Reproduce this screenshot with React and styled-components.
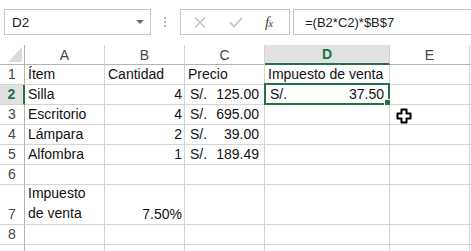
import React from 'react';
import styled, { createGlobalStyle } from 'styled-components';

const GlobalStyle = createGlobalStyle`
  html, body {
    margin: 0;
    padding: 0;
    background: #fff;
    overflow: hidden;
  }
  body {
    font-family: "Liberation Sans", Arial, sans-serif;
    color: #1e1e1e;
  }
`;

const GREEN = '#217346';
const GRID = '#d4d4d4';
const HEAD_LINE = '#b4b4b4';

const Page = styled.div`
  position: relative;
  width: 471px;
  height: 251px;
  overflow: hidden;
`;

const Toolbar = styled.div`
  display: flex;
  align-items: flex-start;
  height: 45px;
  padding: 9px 0 0 4px;
  box-sizing: border-box;
`;

const NameBox = styled.div`
  width: 147px;
  height: 26px;
  box-sizing: border-box;
  border: 1px solid #c6c6c6;
  display: flex;
  align-items: center;
  justify-content: space-between;
  padding: 0 6px 0 7px;
  font-size: 13.5px;
  color: #222;
`;

const Arrow = styled.span`
  width: 0;
  height: 0;
  border-left: 4px solid transparent;
  border-right: 4px solid transparent;
  border-top: 4px solid #6f6f6f;
`;

const Dots = styled.div`
  display: flex;
  flex-direction: column;
  gap: 2px;
  margin: 8px 0 0 13px;
  span {
    width: 2px;
    height: 2px;
    background: #b4b4b4;
  }
`;

const ButtonsBox = styled.div`
  margin-left: 14px;
  width: 110px;
  height: 26px;
  box-sizing: border-box;
  border: 1px solid #c6c6c6;
  display: flex;
  align-items: center;
  padding-left: 13px;
  gap: 23px;
`;

const Fx = styled.span`
  font-family: "Liberation Serif", "Times New Roman", serif;
  font-style: italic;
  font-size: 15px;
  color: #444;
  margin-left: -1px;
  letter-spacing: -1px;
  small {
    font-size: 11px;
  }
`;

const FormulaBox = styled.div`
  flex: 1;
  margin-left: 3px;
  margin-right: -4px;
  height: 26px;
  box-sizing: border-box;
  border: 1px solid #c6c6c6;
  display: flex;
  align-items: center;
  padding-left: 11px;
  font-size: 13px;
  color: #222;
`;

const Sheet = styled.div`
  display: grid;
  grid-template-columns: 25px 80px 80px 80px 125px 80px 1fr;
  grid-template-rows: 20px repeat(6, 20px) 40px 20px 20px;
  font-size: 14px;
`;

const ColHead = styled.div`
  box-sizing: border-box;
  border-right: 1px solid ${GRID};
  border-bottom: ${p => (p.$active ? `2px solid ${GREEN}` : `1px solid ${HEAD_LINE}`)};
  background: ${p => (p.$active ? '#e1e1e1' : '#fff')};
  color: ${p => (p.$active ? GREEN : '#444')};
  font-weight: ${p => (p.$active ? 'bold' : 'normal')};
  display: flex;
  align-items: center;
  justify-content: center;
  line-height: 18px;
`;

const Corner = styled.div`
  box-sizing: border-box;
  border-right: 1px solid ${HEAD_LINE};
  border-bottom: 1px solid ${HEAD_LINE};
  position: relative;
  &::after {
    content: '';
    position: absolute;
    right: 2px;
    bottom: 2px;
    width: 0;
    height: 0;
    border-left: 14px solid transparent;
    border-bottom: 15px solid #dcdcdc;
  }
`;

const RowHead = styled.div`
  box-sizing: border-box;
  border-right: ${p => (p.$active ? `2px solid ${GREEN}` : `1px solid ${HEAD_LINE}`)};
  border-bottom: 1px solid ${GRID};
  background: ${p => (p.$active ? '#e1e1e1' : '#fff')};
  color: ${p => (p.$active ? GREEN : '#444')};
  font-weight: ${p => (p.$active ? 'bold' : 'normal')};
  display: flex;
  align-items: flex-end;
  justify-content: center;
  line-height: 18px;
  padding-bottom: 1px;
`;

const Cell = styled.div`
  position: relative;
  box-sizing: border-box;
  border-right: 1px solid ${GRID};
  border-bottom: 1px solid ${GRID};
  display: flex;
  flex-direction: column;
  justify-content: flex-end;
  align-items: ${p => (p.$right ? 'flex-end' : 'flex-start')};
  padding: 0 2px 1px 3px;
  line-height: ${p => (p.$wrap ? '20px' : '18px')};
  white-space: nowrap;
  color: #111;
`;

const Money = styled.div`
  display: flex;
  justify-content: space-between;
  width: 100%;
  padding: 0 3px 0 2px;
  box-sizing: border-box;
`;

const Selection = styled.div`
  position: absolute;
  left: -1px;
  top: -2px;
  right: -1px;
  bottom: -1px;
  border: 2px solid ${GREEN};
  pointer-events: none;
`;

const Handle = styled.div`
  position: absolute;
  right: -3px;
  bottom: -3px;
  width: 5px;
  height: 5px;
  background: ${GREEN};
  border: 1px solid #fff;
`;

const Cursor = styled.svg`
  position: absolute;
  left: 396px;
  top: 108px;
`;

const columns = ['A', 'B', 'C', 'D', 'E', ''];

const rows = [
  { n: 1, a: 'Ítem', b: 'Cantidad', c: 'Precio', d: 'Impuesto de venta' },
  { n: 2, a: 'Silla', b: '4', price: '125.00', tax: '37.50', active: true },
  { n: 3, a: 'Escritorio', b: '4', price: '695.00' },
  { n: 4, a: 'Lámpara', b: '2', price: '39.00' },
  { n: 5, a: 'Alfombra', b: '1', price: '189.49' },
  { n: 6 },
  { n: 7, lines: ['Impuesto', 'de venta'], b: '7.50%' },
  { n: 8 },
  { n: 9, hidden: true },
];

const App = () => (
  <Page>
    <GlobalStyle />
    <Toolbar>
      <NameBox>
        D2
        <Arrow />
      </NameBox>
      <Dots>
        <span />
        <span />
        <span />
      </Dots>
      <ButtonsBox>
        <svg width="12" height="11" viewBox="0 0 12 11">
          <path d="M1 0.5 L11 10.5 M11 0.5 L1 10.5" stroke="#c4c4c4" strokeWidth="1.4" fill="none" />
        </svg>
        <svg width="14" height="11" viewBox="0 0 14 11">
          <path d="M1 5.5 L5 9.5 L13 1" stroke="#c4c4c4" strokeWidth="1.8" fill="none" />
        </svg>
        <Fx>
          f<small>x</small>
        </Fx>
      </ButtonsBox>
      <FormulaBox>=(B2*C2)*$B$7</FormulaBox>
    </Toolbar>

    <Sheet>
      <Corner />
      {columns.map((c, i) => (
        <ColHead key={i} $active={c === 'D'}>
          {c}
        </ColHead>
      ))}

      {rows.map(r => (
        <React.Fragment key={r.n}>
          <RowHead $active={r.active}>{r.hidden ? '' : r.n}</RowHead>
          <Cell $wrap={!!r.lines}>
            {r.lines ? r.lines.map(l => <span key={l}>{l}</span>) : r.a}
          </Cell>
          <Cell $right={r.n !== 1}>{r.b}</Cell>
          <Cell>
            {r.price ? (
              <Money>
                <span>S/.</span>
                <span>{r.price}</span>
              </Money>
            ) : (
              r.c
            )}
          </Cell>
          <Cell>
            {r.tax ? (
              <Money>
                <span>S/.</span>
                <span>{r.tax}</span>
              </Money>
            ) : (
              r.d
            )}
            {r.active && (
              <Selection>
                <Handle />
              </Selection>
            )}
          </Cell>
          <Cell />
          <Cell />
        </React.Fragment>
      ))}
    </Sheet>

    <Cursor width="16" height="16" viewBox="0 0 16 16">
      <path
        d="M5.5 1.5 H10.5 V5.5 H14.5 V10.5 H10.5 V14.5 H5.5 V10.5 H1.5 V5.5 H5.5 Z"
        fill="#fff"
        stroke="#000"
        strokeWidth="2"
        strokeLinejoin="round"
      />
    </Cursor>
  </Page>
);

export default App;
